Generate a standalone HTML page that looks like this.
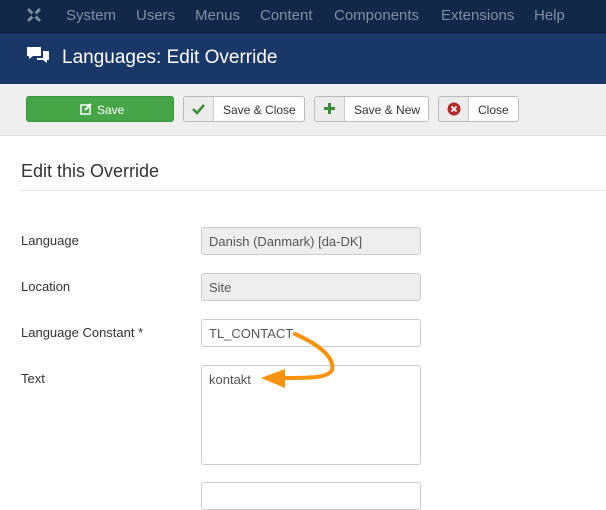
<!DOCTYPE html>
<html><head><style>
body{margin:0;width:606px;height:484px;overflow:hidden;font-family:"Liberation Sans",sans-serif;background:#fff;position:relative}
.nav{position:absolute;left:0;top:0;width:606px;height:32px;background:#132848;border-bottom:1px solid #0b1a30}
.nav span{position:absolute;top:7px;font-size:15px;color:#7f8ea5}
.title{position:absolute;top:33px;left:0;width:606px;height:51px;background:#1a3867}
.title h1{position:absolute;left:62px;top:14px;margin:0;font-weight:normal;font-size:19px;color:#fff}
.tb{position:absolute;top:84px;left:0;width:606px;height:51px;background:#efefef;border-bottom:1px solid #ddd}
.btn{position:absolute;top:12px;height:26px;border:1px solid #bbb;border-radius:3px;background:#fff;font-size:12px;color:#333;box-sizing:border-box}
.btn .ic{position:absolute;left:0;top:0;width:29px;height:24px;background:#ececec;border-right:1px solid #ccc;border-radius:3px 0 0 3px}
.btn .t{position:absolute;top:6px}
h2{position:absolute;left:21px;top:161px;margin:0;font-weight:normal;font-size:18px;color:#333}
.hr{position:absolute;left:20px;top:190px;width:586px;height:1px;background:#e5e5e5}
.lab{position:absolute;left:21px;font-size:13px;color:#333}
.in{position:absolute;left:201px;width:220px;height:28px;box-sizing:border-box;border:1px solid #ccc;border-radius:3px;font-size:13px;color:#555;padding:6px 7px}
.ro{background:#eee}
</style></head><body>
<div class="nav">
<svg style="position:absolute;left:26px;top:7px" width="16" height="16" viewBox="0 0 16 16"><g stroke="#7f8ea5" stroke-width="3" stroke-linecap="round"><path d="M3 3L13 13M13 3L3 13"/></g><circle cx="8" cy="8" r="2.5" fill="#132848"/></svg>
<span style="left:66px">System</span><span style="left:136px">Users</span><span style="left:195px">Menus</span><span style="left:260px">Content</span><span style="left:334px">Components</span><span style="left:441px">Extensions</span><span style="left:534px">Help</span>
</div>
<div class="title">
<svg style="position:absolute;left:26px;top:13px" width="24" height="22" viewBox="0 0 24 22"><path d="M1 1h14v9H7l-4 3v-3H1z" fill="#fff"/><path d="M17 5h6v9h-2v3l-4-3h-6v-2h6z" fill="#fff"/></svg>
<h1>Languages: Edit Override</h1>
</div>
<div class="tb">
<div class="btn" style="left:26px;width:148px;background:#46a546;border-color:#3c943c;color:#fff"><svg style="position:absolute;left:53px;top:6px" width="12" height="12" viewBox="0 0 12 12"><rect x="1" y="2" width="9" height="9" fill="none" stroke="#fff" stroke-width="1.5"/><path d="M5 7l6-6" stroke="#fff" stroke-width="2"/></svg><span class="t" style="left:70px">Save</span></div>
<div class="btn" style="left:183px;width:122px"><div class="ic"><svg style="position:absolute;left:8px;top:6px" width="13" height="12"><path d="M1 6l4 4 7-8" fill="none" stroke="#3c8a3c" stroke-width="2.5"/></svg></div><span class="t" style="left:39px">Save &amp; Close</span></div>
<div class="btn" style="left:314px;width:115px"><div class="ic"><svg style="position:absolute;left:8px;top:5px" width="13" height="13"><path d="M6.5 1v11M1 6.5h11" stroke="#3c8a3c" stroke-width="3"/></svg></div><span class="t" style="left:39px">Save &amp; New</span></div>
<div class="btn" style="left:438px;width:81px"><div class="ic"><svg style="position:absolute;left:8px;top:5px" width="14" height="14"><circle cx="7" cy="7" r="6.5" fill="#b32a2a"/><path d="M4.5 4.5l5 5M9.5 4.5l-5 5" stroke="#fff" stroke-width="1.8"/></svg></div><span class="t" style="left:39px">Close</span></div>
</div>
<h2>Edit this Override</h2><div class="hr"></div>
<div class="lab" style="top:233px">Language</div>
<div class="in ro" style="top:227px">Danish (Danmark) [da-DK]</div>
<div class="lab" style="top:279px">Location</div>
<div class="in ro" style="top:273px">Site</div>
<div class="lab" style="top:325px">Language Constant *</div>
<div class="in" style="top:319px">TL_CONTACT</div>
<div class="lab" style="top:371px">Text</div>
<div class="in" style="top:365px;height:100px">kontakt</div>
<div class="in" style="top:482px"></div>
<svg style="position:absolute;left:0;top:0" width="606" height="484"><path d="M295 334C320 345 335 358 332 370C328 378 310 378 285 378" fill="none" stroke="#f7930e" stroke-width="4" stroke-linecap="round"/><path d="M261 378L285 369L285 388Z" fill="#f7930e"/></svg>
</body></html>
